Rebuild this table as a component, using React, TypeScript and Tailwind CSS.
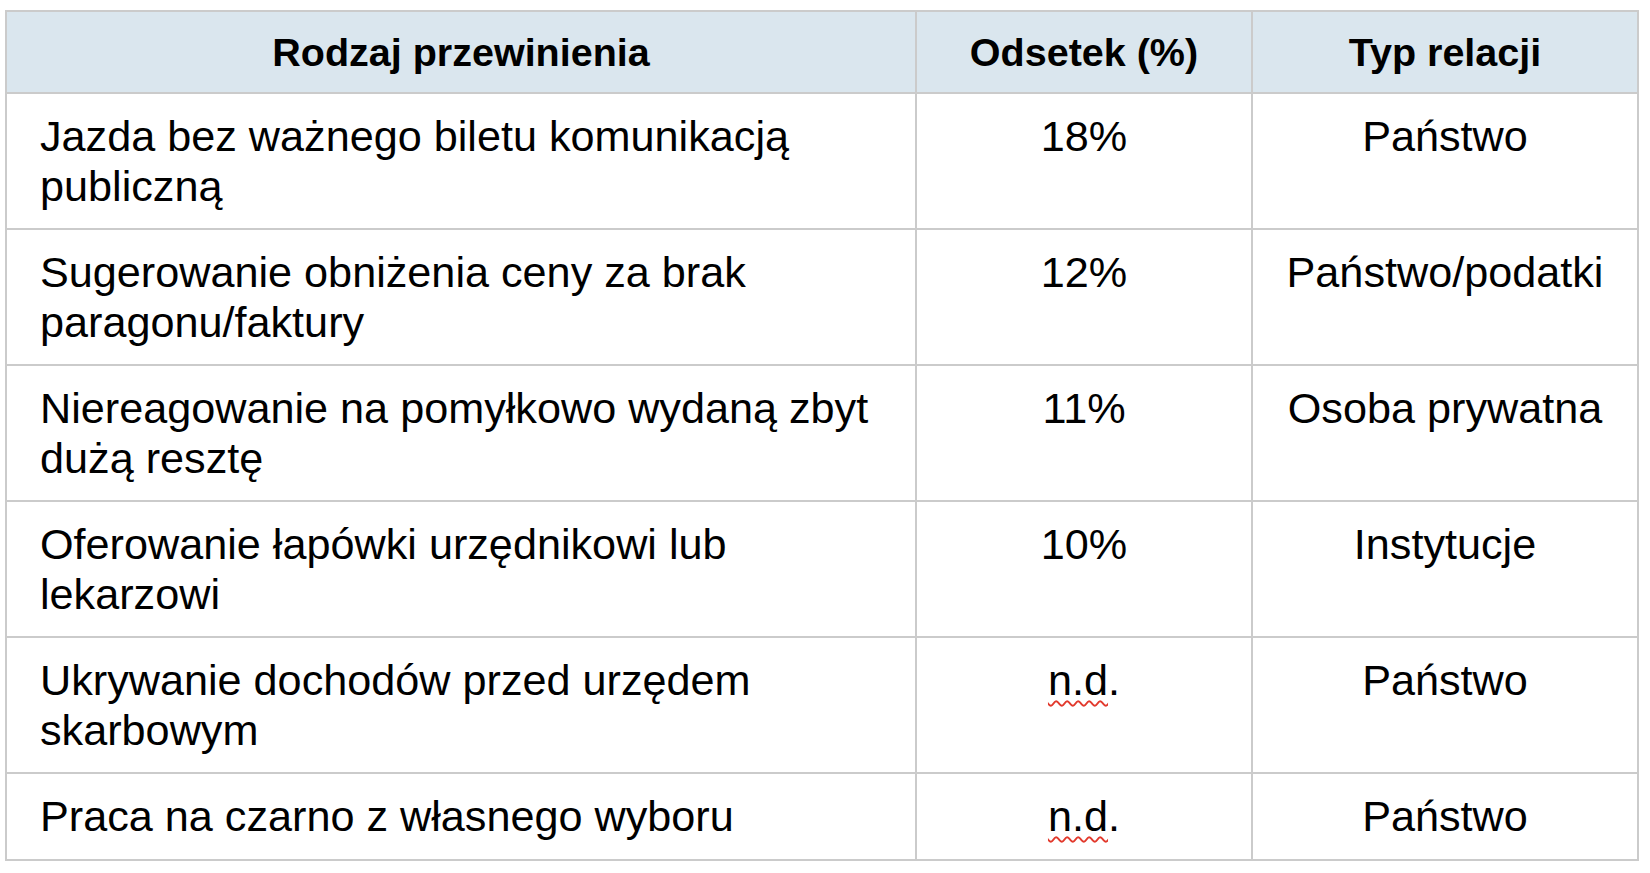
const rows: { label: string[]; pct: string; rel: string }[] = [
  { label: ["Jazda bez ważnego biletu komunikacją", "publiczną"], pct: "18%", rel: "Państwo" },
  { label: ["Sugerowanie obniżenia ceny za brak", "paragonu/faktury"], pct: "12%", rel: "Państwo/podatki" },
  { label: ["Niereagowanie na pomyłkowo wydaną zbyt", "dużą resztę"], pct: "11%", rel: "Osoba prywatna" },
  { label: ["Oferowanie łapówki urzędnikowi lub", "lekarzowi"], pct: "10%", rel: "Instytucje" },
  { label: ["Ukrywanie dochodów przed urzędem", "skarbowym"], pct: "n.d.", rel: "Państwo" },
  { label: ["Praca na czarno z własnego wyboru"], pct: "n.d.", rel: "Państwo" },
];

function Pct({ value }: { value: string }) {
  if (value !== "n.d.") return <>{value}</>;
  // spellcheck squiggle under "n.d"
  return (
    <>
      <span className="underline decoration-wavy decoration-[#e2392c] decoration-[1.5px] underline-offset-[5px]">
        n.d
      </span>
      .
    </>
  );
}

export default function App() {
  return (
    <div className="w-[1650px] h-[873px] bg-white pt-[10px] pl-[5px] font-['Liberation_Sans',Arial,sans-serif] text-black">
      <table className="table-fixed border-collapse w-[1632px]">
        <colgroup>
          <col className="w-[910px]" />
          <col className="w-[336px]" />
          <col className="w-[386px]" />
        </colgroup>
        <thead>
          <tr className="h-[82px] bg-[#dae6ee]">
            {["Rodzaj przewinienia", "Odsetek (%)", "Typ relacji"].map((h) => (
              <th
                key={h}
                className="border-2 border-[#cbcbcb] align-top pt-[18px] text-[39.5px] leading-[1.15] font-bold text-center"
              >
                {h}
              </th>
            ))}
          </tr>
        </thead>
        <tbody>
          {rows.map((r, i) => (
            <tr key={i} className={i === rows.length - 1 ? "h-[87px]" : "h-[136px]"}>
              <td className="border-2 border-[#cbcbcb] align-top pt-[18px] pl-[33px] pr-2 text-[43.2px] leading-[1.15]">
                {r.label.map((l) => (
                  <div key={l}>{l}</div>
                ))}
              </td>
              <td className="border-2 border-[#cbcbcb] align-top pt-[18px] text-center text-[43.2px] leading-[1.15]">
                <Pct value={r.pct} />
              </td>
              <td className="border-2 border-[#cbcbcb] align-top pt-[18px] text-center text-[43.2px] leading-[1.15]">
                {r.rel}
              </td>
            </tr>
          ))}
        </tbody>
      </table>
    </div>
  );
}
